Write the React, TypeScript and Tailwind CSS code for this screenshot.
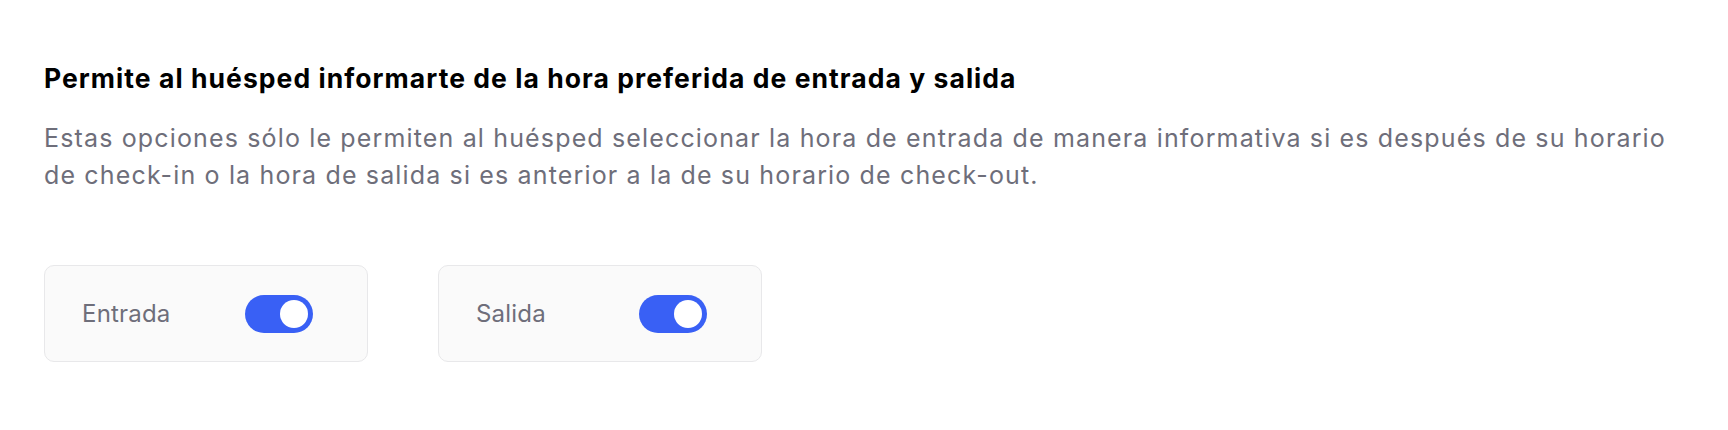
import React, { useState } from 'react';

const Toggle = ({ on, onChange }: { on: boolean; onChange: () => void }) => (
  <button
    type="button"
    onClick={onChange}
    className={`relative flex h-[38px] w-[68px] shrink-0 items-center rounded-full px-[5px] ${on ? 'justify-end bg-[#3960f5]' : 'justify-start bg-[#d4d4d8]'}`}
  >
    <span className="block h-[28px] w-[28px] rounded-full bg-white" />
  </button>
);

export default function App() {
  const [entrada, setEntrada] = useState(true);
  const [salida, setSalida] = useState(true);

  const options = [
    { label: 'Entrada', on: entrada, toggle: () => setEntrada(!entrada) },
    { label: 'Salida', on: salida, toggle: () => setSalida(!salida) },
  ];

  return (
    <div className="min-h-screen bg-white px-[44px] pt-[62px] font-['Inter',sans-serif]">
      <h2 className="text-[26.5px] leading-[32px] font-bold tracking-[1.05px] text-black">
        Permite al huésped informarte de la hora preferida de entrada y salida
      </h2>
      <p className="mt-[26px] text-[25px] leading-[37px] tracking-[1.15px] text-[#6e6e7a]">
        Estas opciones sólo le permiten al huésped seleccionar la hora de entrada de manera informativa si es después de su horario de check-in o la hora de salida si es anterior a la de su horario de check-out.
      </p>
      <div className="mt-[71px] flex gap-[70px]">
        {options.map(opt => (
          <div
            key={opt.label}
            className="flex h-[97px] w-[324px] items-center rounded-[10px] border border-[#e8e8ea] bg-[#fafafa] px-[37px]"
          >
            <span className="w-[163px] text-[24px] tracking-[0.2px] text-[#6e6e7a]">{opt.label}</span>
            <Toggle on={opt.on} onChange={opt.toggle} />
          </div>
        ))}
      </div>
    </div>
  );
}
